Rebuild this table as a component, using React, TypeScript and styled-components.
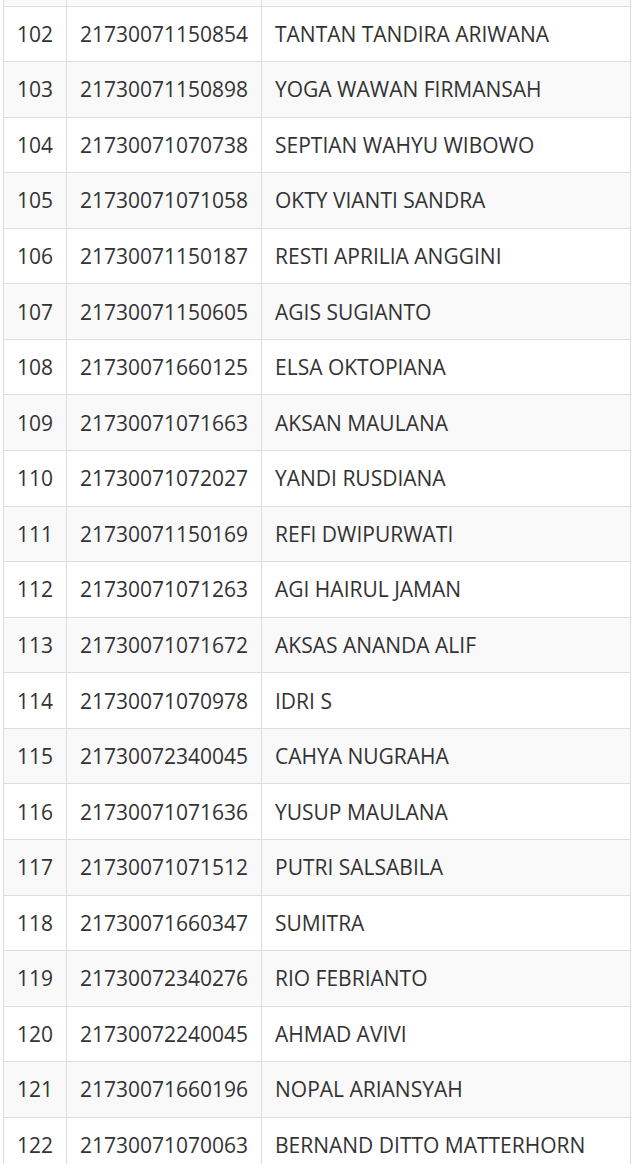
import React from "react";
import styled, { createGlobalStyle } from "styled-components";

const GlobalStyle = createGlobalStyle`
  html, body {
    margin: 0;
    padding: 0;
    background: #fff;
  }
  body {
    font-family: "Open Sans", "DejaVu Sans", sans-serif;
    color: #333;
    overflow: hidden;
  }
`;

const rows: [number, string, string][] = [
  [102, "21730071150854", "TANTAN TANDIRA ARIWANA"],
  [103, "21730071150898", "YOGA WAWAN FIRMANSAH"],
  [104, "21730071070738", "SEPTIAN WAHYU WIBOWO"],
  [105, "21730071071058", "OKTY VIANTI SANDRA"],
  [106, "21730071150187", "RESTI APRILIA ANGGINI"],
  [107, "21730071150605", "AGIS SUGIANTO"],
  [108, "21730071660125", "ELSA OKTOPIANA"],
  [109, "21730071071663", "AKSAN MAULANA"],
  [110, "21730071072027", "YANDI RUSDIANA"],
  [111, "21730071150169", "REFI DWIPURWATI"],
  [112, "21730071071263", "AGI HAIRUL JAMAN"],
  [113, "21730071071672", "AKSAS ANANDA ALIF"],
  [114, "21730071070978", "IDRI S"],
  [115, "21730072340045", "CAHYA NUGRAHA"],
  [116, "21730071071636", "YUSUP MAULANA"],
  [117, "21730071071512", "PUTRI SALSABILA"],
  [118, "21730071660347", "SUMITRA"],
  [119, "21730072340276", "RIO FEBRIANTO"],
  [120, "21730072240045", "AHMAD AVIVI"],
  [121, "21730071660196", "NOPAL ARIANSYAH"],
  [122, "21730071070063", "BERNAND DITTO MATTERHORN"],
];

const Wrapper = styled.div`
  padding: 0 6px 0 3px;
`;

const Table = styled.table`
  width: 100%;
  table-layout: fixed;
  border-collapse: collapse;
  font-size: 21px;
  line-height: 30px;
`;

const Row = styled.tr<{ $striped: boolean }>`
  background: ${(p) => (p.$striped ? "#f9f9f9" : "#fff")};
`;

const Cell = styled.td`
  border: 1.5px solid #ddd;
  padding: 12.29px 12px 12.29px 13px;
  white-space: nowrap;
  overflow: hidden;
  vertical-align: top;
`;

const StubCell = styled.td`
  border: 1.5px solid #ddd;
  border-top: 0;
  padding: 0;
  height: 5.5px;
`;

export default function App() {
  return (
    <Wrapper>
      <GlobalStyle />
      <Table>
        <colgroup>
          <col style={{ width: 63 }} />
          <col style={{ width: 195 }} />
          <col />
        </colgroup>
        <tbody>
          <Row $striped>
            <StubCell />
            <StubCell />
            <StubCell />
          </Row>
          {rows.map(([no, nim, name]) => (
            <Row key={no} $striped={no % 2 === 1}>
              <Cell>{no}</Cell>
              <Cell>{nim}</Cell>
              <Cell>{name}</Cell>
            </Row>
          ))}
        </tbody>
      </Table>
    </Wrapper>
  );
}
